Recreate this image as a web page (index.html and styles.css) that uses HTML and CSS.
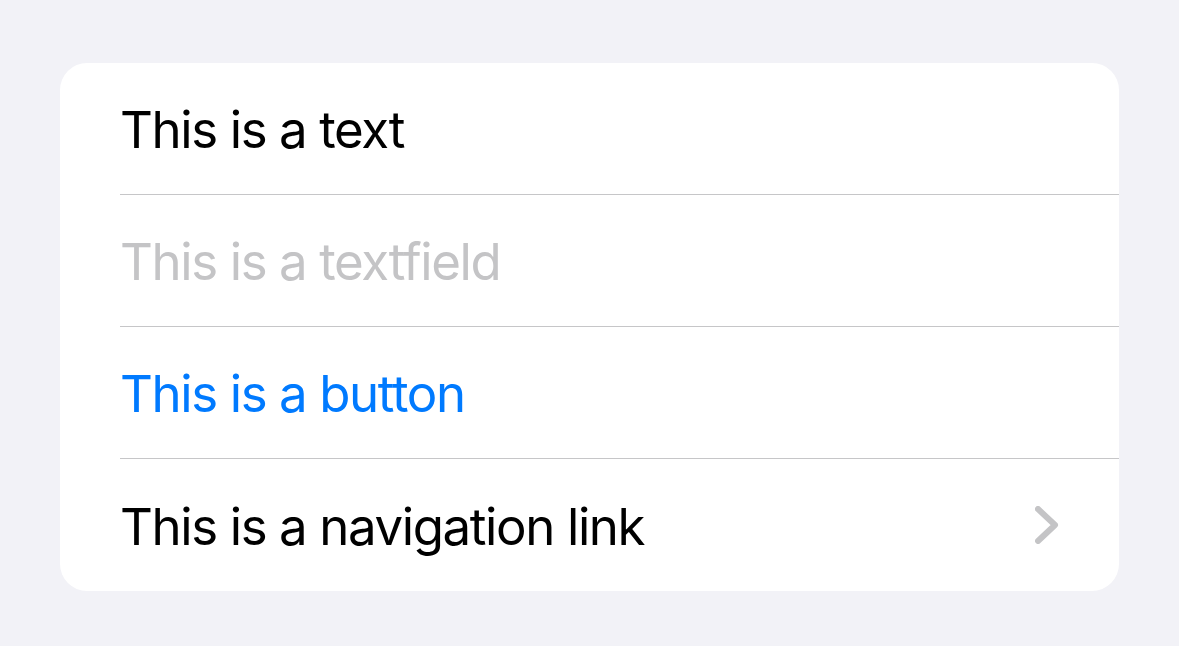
FILE: index.html
```html
<!DOCTYPE html>
<html>
<head>
<meta charset="utf-8">
<link rel="stylesheet" href="styles.css">
</head>
<body>
<div class="page">
  <div class="card">
    <div class="row"><span class="label">This is a text</span></div>
    <div class="row"><span class="label placeholder">This is a textfield</span></div>
    <div class="row"><span class="label button">This is a button</span></div>
    <div class="row last">
      <span class="label">This is a navigation link</span>
      <svg class="chevron" width="24" height="38" viewBox="0 0 24 38"><path d="M3 3 L20 19 L3 35" fill="none" stroke="#c4c4c6" stroke-width="6" stroke-linecap="round" stroke-linejoin="round"/></svg>
    </div>
  </div>
</div>
</body>
</html>
```
FILE: styles.css
```css
html, body {
  margin: 0;
  padding: 0;
  background: #f2f2f7;
}
.page {
  padding: 63px 60px 0 60px;
  width: 1179px;
  box-sizing: border-box;
}
.card {
  width: 1059px;
  background: #ffffff;
  border-radius: 27px;
  display: flex;
  flex-direction: column;
  overflow: hidden;
}
.row {
  height: 131px;
  margin-left: 60px;
  padding-right: 60px;
  display: flex;
  align-items: center;
  justify-content: space-between;
  border-bottom: 1px solid #c6c6c8;
}
.row.last {
  border-bottom: none;
  height: 132px;
}
.label {
  font-family: Inter, "Noto Sans", sans-serif;
  font-size: 51px;
  letter-spacing: -1.4px;
  color: #000000;
  line-height: 1;
  padding-top: 2px;
}
.placeholder { color: #c4c4c6; }
.button { color: #007aff; }
.chevron { display: block; margin-right: 0; }
```
